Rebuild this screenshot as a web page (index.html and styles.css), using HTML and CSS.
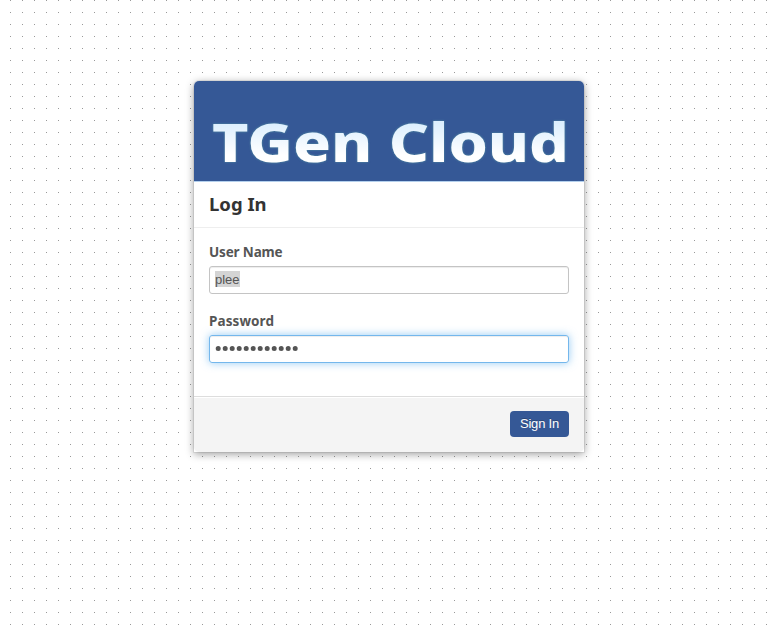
FILE: index.html
```html
<!DOCTYPE html>
<html lang="en">
<head>
<meta charset="utf-8">
<title>Log In</title>
<link rel="stylesheet" href="styles.css">
</head>
<body>
<form class="card">
  <header class="brand">
    <svg class="logo" width="390" height="100" viewBox="0 0 390 100" role="img" aria-label="TGen Cloud">
      <defs>
        <linearGradient id="shine" gradientUnits="userSpaceOnUse" x1="0" y1="42" x2="0" y2="82">
          <stop offset="0" stop-color="#dceffe"/>
          <stop offset="0.8" stop-color="#ffffff"/>
        </linearGradient>
      </defs>
      <text class="logo-text" x="18" y="81" textLength="357" lengthAdjust="spacingAndGlyphs" fill="url(#shine)">TGen Cloud</text>
    </svg>
  </header>
  <h1 class="title"><span>Log In</span></h1>
  <div class="fields">
    <label class="label" for="user">User Name</label>
    <div class="input" id="user"><span class="selected">plee</span></div>
    <label class="label label-wide" for="pass">Password</label>
    <div class="input focused" id="pass">
      <svg class="mask" width="84" height="7" viewBox="0 0 84 7" aria-label="Password">
        <path d="M3.2 3.4h77.4"/>
      </svg>
    </div>
  </div>
  <footer class="footer"><button class="button" type="button">Sign In</button></footer>
</form>
</body>
</html>
```
FILE: styles.css
```css
* { box-sizing: border-box; }
body {
  margin: 0;
  min-height: 636px;
  padding-top: 81px;
  background: conic-gradient(from 0deg at 1px 1px, #fff 75%, #999 0) 10px 0 / 12px 12px;
  font-family: "Liberation Sans", Arial, sans-serif;
  font-size: 13px;
  color: #555;
}
.card {
  width: 390px;
  height: 371px;
  margin: 0 auto 0 194px;
  display: flex;
  flex-direction: column;
  background: #fff;
  border-radius: 5px 5px 0 0;
  box-shadow: 0 0 0 1px rgba(0,0,0,.06), 0 2px 8px rgba(0,0,0,.4);
}
.brand {
  height: 101px;
  background: #355896;
  border-bottom: 1px solid #b4d0ed;
  border-radius: 5px 5px 0 0;
}
.logo { display: block; }
.logo-text {
  font: 800 53px "Noto Sans", sans-serif;
  filter: drop-shadow(0 0 1px rgba(100,170,170,.7));
}
.title {
  height: 46px;
  margin: 0;
  padding: 9px 15px 0;
  border-bottom: 1px solid #eee;
  font: 700 18.5px/25px "Noto Sans", sans-serif;
  color: #333;
}
.fields { height: 168px; padding: 15px 15px 0; }
.label {
  display: block;
  height: 23px;
  font: 700 13.5px/18px "Noto Sans", sans-serif;
  letter-spacing: -.15px;
}
.label-wide { letter-spacing: .1px; }
.input {
  height: 28px;
  margin-bottom: 18px;
  padding: 4px 5px;
  border: 1px solid #c4c4c4;
  border-radius: 3px;
  line-height: 17px;
  box-shadow: inset 0 1px 1px rgba(0,0,0,.075);
}
.selected { display: inline-block; height: 16px; background: #d4d4d4; }
.focused {
  border-color: #74b7ec;
  box-shadow: inset 0 1px 1px rgba(0,0,0,.075), 0 0 8px rgba(82,168,236,.6);
}
.mask { display: block; margin-top: 5px; }
.mask path { stroke: #555; stroke-width: 5; stroke-linecap: round; stroke-dasharray: 0 7; }
.footer {
  flex: 1;
  display: flex;
  justify-content: flex-end;
  padding: 14px 15px;
  background: #f4f4f4;
  border-top: 1px solid #ddd;
  border-radius: 0 0 5px 5px;
  box-shadow: inset 0 1px 0 #fff;
}
.button {
  width: 59px;
  height: 26px;
  padding: 0;
  border: 0;
  border-radius: 4px;
  background: #355896;
  color: #fff;
  font: 13px/18px "Liberation Sans", Arial, sans-serif;
  letter-spacing: -.2px;
  text-shadow: 0 -1px 0 rgba(0,0,0,.25);
}
```
